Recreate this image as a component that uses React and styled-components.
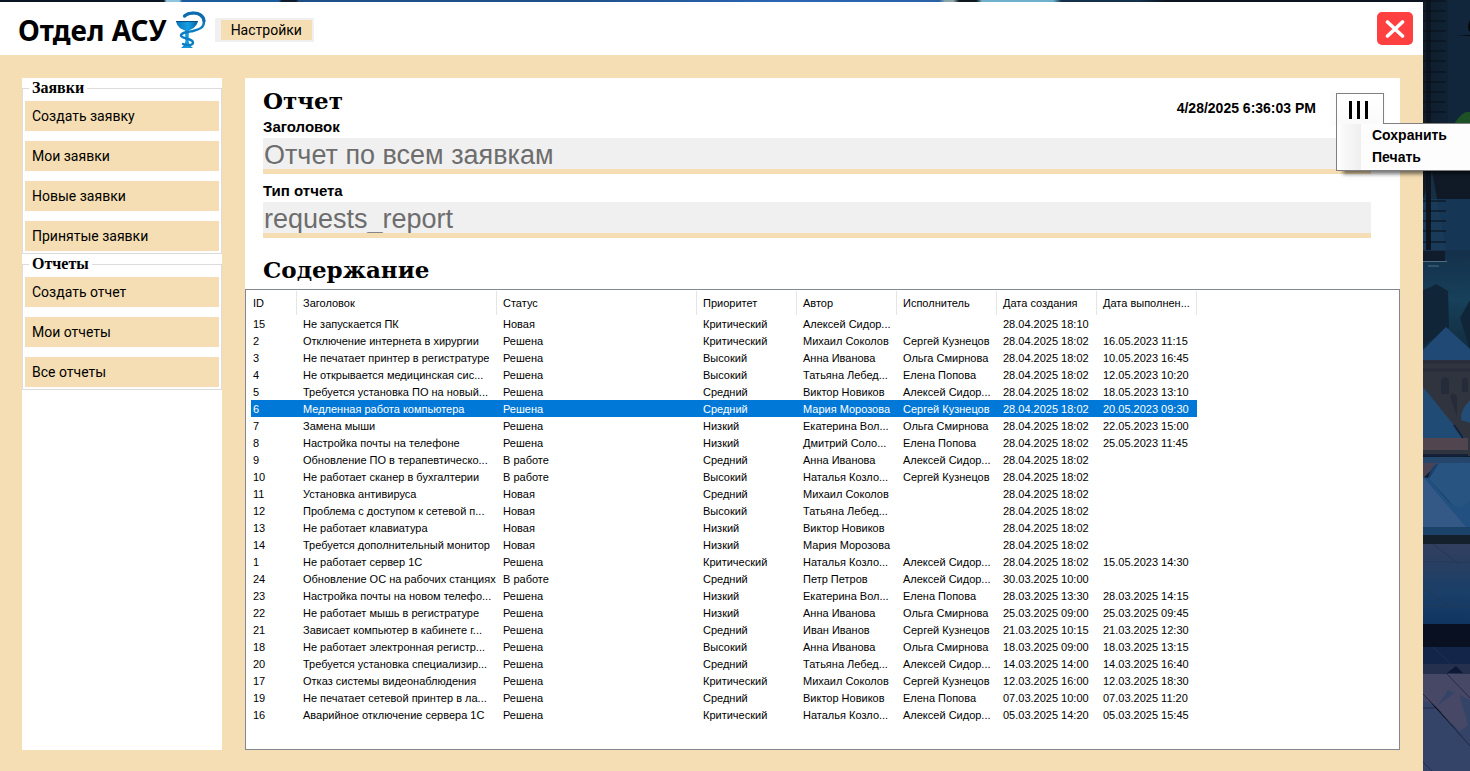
import React from "react";
import styled, { createGlobalStyle, css } from "styled-components";

const WHEAT = "#f5deb3";
const SANS = `"Liberation Sans", Arial, sans-serif`;
const SERIF = `"Liberation Serif", "Times New Roman", serif`;
const HEADING_SERIF = `"DejaVu Serif", serif`;
const UI = `Roboto, "Liberation Sans", sans-serif`;

const GlobalStyle = createGlobalStyle`
  * { box-sizing: border-box; }
  body { margin: 0; background: #0d1c2c; color: #000; font-family: ${SANS}; }
  button { font: inherit; color: inherit; border: 0; padding: 0; cursor: pointer; }
`;

const Desktop = styled.div`
  min-height: 100vh;
  display: grid;
  grid-template-columns: minmax(0, 1fr) 47px;
  grid-template-rows: 2px 1fr;
  overflow: hidden;
`;

const TopEdge = styled.div`
  background: linear-gradient(
    to right,
    #0a1624 0 11.5%, #8fc4dc 11.7% 12.6%, #1d5c9c 12.8% 19.6%,
    #101c2c 19.8% 20.8%, #1f4f88 21% 40%, #2a66b4 55%, #2a62a8 66%,
    #8aa4a8 66.4% 67%, #101820 67.4% 68.6%, #6fb0cc 69% 74%,
    #14304c 74.6% 80%, #0b1420 82% 100%
  );
`;

const Wallpaper = styled.div`
  grid-column: 2;
  grid-row: 1 / 3;
  overflow: hidden;
  svg { display: block; width: 100%; height: 100%; min-height: 771px; }
`;

const Window = styled.div`
  display: flex;
  flex-direction: column;
  background: ${WHEAT};
`;

const Header = styled.header`
  height: 53px;
  padding: 3px 10px 0 18px;
  display: flex;
  align-items: center;
  background: #fff;
`;

const Brand = styled.h1`
  margin: 0 8px 0 0;
  font: bold 28px/40px "Comic Sans MS", "Noto Sans", sans-serif;
  white-space: nowrap;
`;

const SettingsBar = styled.nav`
  margin-left: 8px;
  padding: 2px 2px 2px 6px;
  background: #f0f0f0;
`;

const SettingsButton = styled.button`
  display: block;
  height: 20px;
  padding: 0 10px;
  background: ${WHEAT};
  font: 14px/20px ${UI};
`;

const CloseButton = styled.button`
  align-self: flex-start;
  width: 36px;
  height: 33px;
  margin: 7px 0 0 auto;
  border-radius: 5px;
  background: #ff4040;
  display: grid;
  place-items: center;
`;

const Body = styled.div`
  flex: 1;
  display: flex;
  gap: 23px;
  padding: 23px 23px 21px 22px;
`;

const Sidebar = styled.nav`
  flex: 0 0 200px;
  background: #fff;
`;

const Group = styled.fieldset`
  margin: 0;
  border: 1px solid #dcdcdc;
  padding: 3px 2px 2px;
  display: flex;
  flex-direction: column;
  gap: 10px;
  min-width: 0;
`;

const Legend = styled.legend`
  margin-left: 4px;
  padding: 0 3px;
  font: bold 16px/20px ${SERIF};
`;

const SideButton = styled.button`
  display: block;
  width: 100%;
  height: 30px;
  padding: 0 7px;
  background: ${WHEAT};
  font: 14px/30px ${UI};
  text-align: left;
`;

const Panel = styled.main`
  flex: 1;
  min-width: 0;
  display: flex;
  flex-direction: column;
  background: #fff;
`;

const ReportHead = styled.div`
  display: flex;
  justify-content: space-between;
  height: 60px;
  padding: 7px 14px 0 18px;
`;

const Heading = styled.h2`
  margin: 0;
  font: bold 23px/32px ${HEADING_SERIF};
`;

const ContentHeading = styled(Heading)`
  margin: 16px 0 3px 18px;
`;

const FieldLabel = styled.label`
  display: block;
  font: bold 15px/20px ${SANS};
`;

const HeadTools = styled.div`
  display: flex;
  align-items: flex-start;
`;

const Timestamp = styled.time`
  padding-top: 13px;
  font: bold 14px/20px ${SANS};
`;

const MenuBar = styled.div`
  position: relative;
  margin: 6px 0 0 14px;
  padding: 2px 2px 2px 6px;
  background: #fcfcfc;
`;

const MenuToggle = styled.button`
  position: relative;
  z-index: 3;
  width: 48px;
  height: 31px;
  padding: 2px 3px 0 0;
  border: 1px solid #808080;
  border-bottom: 0;
  background: linear-gradient(#fff, #fafafa);
  display: grid;
  place-items: center;
`;

const Menu = styled.ul`
  position: absolute;
  z-index: 2;
  top: 32px;
  left: 6px;
  width: 160px;
  height: 48px;
  margin: 0;
  padding: 0 1px;
  list-style: none;
  border: 1px solid #808080;
  background: linear-gradient(to right, #fdfdfd 4px, #fafafa 4px, #efefef 24px, #fdfdfd 24px);
  box-shadow: 5px 5px 4px -2px rgba(0, 0, 0, 0.55);
`;

const MenuItem = styled.button`
  display: block;
  width: 100%;
  height: 22px;
  padding-left: 34px;
  background: transparent;
  font: bold 14px/22px ${SANS};
  text-align: left;
`;

const ReportFields = styled.div`
  display: flex;
  flex-direction: column;
  padding: 0 29px 0 18px;
`;

const FieldInput = styled.input`
  display: block;
  width: 100%;
  height: 36px;
  padding: 3px 0 0 1px;
  border: 0;
  border-bottom: 5px solid ${WHEAT};
  border-radius: 0;
  background: #f0f0f0;
  color: #6d6d6d;
  font: 27px/28px ${SANS};
  outline: 0;
`;

const TypeLabel = styled(FieldLabel)`
  margin: 7px 0 1px;
`;

const ListBox = styled.div`
  flex: 1;
  padding: 1px;
  border: 1px solid #828790;
  overflow: hidden;
`;

const Table = styled.table`
  border-collapse: collapse;
  table-layout: fixed;
  width: 950px;
  font: 11px/15px ${SANS};
`;

const Col = styled.col`
  width: ${({ $w }) => $w}px;
`;

const cell = css`
  text-align: left;
  white-space: nowrap;
  overflow: hidden;
`;

const HeadCell = styled.th`
  ${cell}
  height: 24px;
  padding: 0 2px 0 6px;
  font-weight: normal;
  background: linear-gradient(#e5e5e5, #e5e5e5) right / 1px 100% no-repeat;
`;

const Cell = styled.td`
  ${cell}
  height: 17px;
  padding: 2px 2px 0 6px;
`;

const Row = styled.tr`
  ${({ $selected }) =>
    $selected &&
    css`
      color: #fff;
      td { background: #0078d7; }
      td:first-child { background: linear-gradient(to right, #fff 4px, #0078d7 4px); }
    `}
`;

const COLUMNS = [
  ["ID", 50],
  ["Заголовок", 200],
  ["Статус", 200],
  ["Приоритет", 100],
  ["Автор", 100],
  ["Исполнитель", 100],
  ["Дата создания", 100],
  ["Дата выполнен...", 100],
];

const ROWS = [
  ["15", "Не запускается ПК", "Новая", "Критический", "Алексей Сидор...", "", "28.04.2025 18:10", ""],
  ["2", "Отключение интернета в хирургии", "Решена", "Критический", "Михаил Соколов", "Сергей Кузнецов", "28.04.2025 18:02", "16.05.2023 11:15"],
  ["3", "Не печатает принтер в регистратуре", "Решена", "Высокий", "Анна Иванова", "Ольга Смирнова", "28.04.2025 18:02", "10.05.2023 16:45"],
  ["4", "Не открывается медицинская сис...", "Решена", "Высокий", "Татьяна Лебед...", "Елена Попова", "28.04.2025 18:02", "12.05.2023 10:20"],
  ["5", "Требуется установка ПО на новый...", "Решена", "Средний", "Виктор Новиков", "Алексей Сидор...", "28.04.2025 18:02", "18.05.2023 13:10"],
  ["6", "Медленная работа компьютера", "Решена", "Средний", "Мария Морозова", "Сергей Кузнецов", "28.04.2025 18:02", "20.05.2023 09:30"],
  ["7", "Замена мыши", "Решена", "Низкий", "Екатерина Вол...", "Ольга Смирнова", "28.04.2025 18:02", "22.05.2023 15:00"],
  ["8", "Настройка почты на телефоне", "Решена", "Низкий", "Дмитрий Соло...", "Елена Попова", "28.04.2025 18:02", "25.05.2023 11:45"],
  ["9", "Обновление ПО в терапевтическо...", "В работе", "Средний", "Анна Иванова", "Алексей Сидор...", "28.04.2025 18:02", ""],
  ["10", "Не работает сканер в бухгалтерии", "В работе", "Высокий", "Наталья Козло...", "Сергей Кузнецов", "28.04.2025 18:02", ""],
  ["11", "Установка антивируса", "Новая", "Средний", "Михаил Соколов", "", "28.04.2025 18:02", ""],
  ["12", "Проблема с доступом к сетевой п...", "Новая", "Высокий", "Татьяна Лебед...", "", "28.04.2025 18:02", ""],
  ["13", "Не работает клавиатура", "Новая", "Низкий", "Виктор Новиков", "", "28.04.2025 18:02", ""],
  ["14", "Требуется дополнительный монитор", "Новая", "Низкий", "Мария Морозова", "", "28.04.2025 18:02", ""],
  ["1", "Не работает сервер 1С", "Решена", "Критический", "Наталья Козло...", "Алексей Сидор...", "28.04.2025 18:02", "15.05.2023 14:30"],
  ["24", "Обновление ОС на рабочих станциях", "В работе", "Средний", "Петр Петров", "Алексей Сидор...", "30.03.2025 10:00", ""],
  ["23", "Настройка почты на новом телефо...", "Решена", "Низкий", "Екатерина Вол...", "Елена Попова", "28.03.2025 13:30", "28.03.2025 14:15"],
  ["22", "Не работает мышь в регистратуре", "Решена", "Низкий", "Анна Иванова", "Ольга Смирнова", "25.03.2025 09:00", "25.03.2025 09:45"],
  ["21", "Зависает компьютер в кабинете г...", "Решена", "Средний", "Иван Иванов", "Сергей Кузнецов", "21.03.2025 10:15", "21.03.2025 12:30"],
  ["18", "Не работает электронная регистр...", "Решена", "Высокий", "Анна Иванова", "Ольга Смирнова", "18.03.2025 09:00", "18.03.2025 13:15"],
  ["20", "Требуется установка специализир...", "Решена", "Средний", "Татьяна Лебед...", "Алексей Сидор...", "14.03.2025 14:00", "14.03.2025 16:40"],
  ["17", "Отказ системы видеонаблюдения", "Решена", "Критический", "Михаил Соколов", "Сергей Кузнецов", "12.03.2025 16:00", "12.03.2025 18:30"],
  ["19", "Не печатает сетевой принтер в ла...", "Решена", "Средний", "Виктор Новиков", "Елена Попова", "07.03.2025 10:00", "07.03.2025 11:20"],
  ["16", "Аварийное отключение сервера 1С", "Решена", "Критический", "Наталья Козло...", "Алексей Сидор...", "05.03.2025 14:20", "05.03.2025 15:45"],
];

const GROUPS = [
  ["Заявки", ["Создать заявку", "Мои заявки", "Новые заявки", "Принятые заявки"]],
  ["Отчеты", ["Создать отчет", "Мои отчеты", "Все отчеты"]],
];

const BowlOfHygieia = () => (
  <svg width="32" height="38" viewBox="0 0 32 38" fill="none" aria-hidden="true">
    <defs>
      <linearGradient id="bowl" x1="0" x2="1">
        <stop offset="0" stopColor="#0b74b8" />
        <stop offset="0.55" stopColor="#15a0e2" />
        <stop offset="1" stopColor="#0a5d9c" />
      </linearGradient>
    </defs>
    <path d="M1 10 H23 C22 15 18 18 14 19.500 L13.500 29 C14 33 15 35 18 37 H6 C9 35 10.500 32 10.500 29 L10 19.500 C5 18 2 15 1 10 Z" fill="url(#bowl)" />
    <path d="M1 10.500 H23" stroke="#0a4f88" />
    <path d="M10 5 C12 3 14 2 18 2 C25 2 29 5.500 29 10.500 C29 17 24 18.500 18 20 C12 21 6.500 21.500 6 24.500 C6 28 18 27 18 31.500 C18 34.500 12 35 8 33" stroke="#0d7cc2" strokeWidth="2.400" strokeLinecap="round" />
    <path d="M9.500 5 C12 2.500 15 2 19 2 C24 2 28.500 5 29 10" stroke="#0d6cae" strokeWidth="3.200" strokeLinecap="round" />
  </svg>
);

const NightScene = () => (
  <svg viewBox="0 0 47 771" preserveAspectRatio="none" aria-hidden="true">
    <defs>
      <linearGradient id="sky" x1="0" x2="1" y1="0" y2="0">
        <stop offset="0" stopColor="#101d2c" />
        <stop offset="0.6" stopColor="#0f2336" />
        <stop offset="1" stopColor="#0c1a28" />
      </linearGradient>
      <linearGradient id="mist" x1="0" x2="0" y1="0" y2="1">
        <stop offset="0" stopColor="#14304a" />
        <stop offset="0.5" stopColor="#17405a" />
        <stop offset="1" stopColor="#122c3e" />
      </linearGradient>
      <linearGradient id="ground" x1="0" x2="0" y1="0" y2="1">
        <stop offset="0" stopColor="#333f5e" />
        <stop offset="0.6" stopColor="#1a3f68" />
        <stop offset="1" stopColor="#113561" />
      </linearGradient>
    </defs>
    <rect width="47" height="771" fill="url(#sky)" />
    <path d="M25 0 H47 V123 H25 Z" fill="#11263a" />
    <path d="M47 20 Q43 28 47 32 Z M33 36 H47 V35 Z" fill="#05080d" />
    <path d="M31 124 Q40 110 47 112 V124 Z" fill="#1c5226" />
    <rect y="170" width="47" height="30" fill="#101a26" />
    <rect y="199" width="47" height="56" fill="#163655" />
    <path d="M9 171 L24 255 H0 V199 Z" fill="#1c3d5a" opacity="0.6" />
    <rect x="3" width="5" height="255" fill="#0b141f" />
    <path d="M0 1H23M0 11H23M0 21H23M0 31H23M0 41H23M0 51H23M0 61H23M0 72H23M0 82H23M0 92H23M0 102H23M0 112H23M0 201H23M0 211H23M0 221H23M0 231H23M0 242H23" stroke="#080e17" strokeWidth="1.200" />
    <rect y="250" width="47" height="100" fill="url(#mist)" />
    <path d="M0 251 H22 V261 H0 Z" fill="#101c2b" />
    <path d="M0 261.500 H24 M5 266 H16" stroke="#4c7187" />
    <path d="M0 290 L8 287 L13 284 L20 288 L25 291 L26 328 L0 346 Z M37 318 L47 300 V350 Z" fill="#102638" />
    <path d="M0 350 L23 327 L47 349 V361 H0 Z" fill="#204a75" />
    <rect y="360" width="47" height="96" fill="#30343f" />
    <path d="M0 362 H47 M0 370 H47" stroke="#272d3b" strokeWidth="3" />
    <path d="M18 380 q4 -6 8 0 v14 h-8 Z M27 396 q4 -5 7 1 v20 Z M39 380 q4 -5 6 0 v12 h-6 Z" fill="#252b39" />
    <path d="M0 387 L30 424 L42 438 H0 Z" fill="#204b75" />
    <path d="M47 400 Q37 410 38 420 L47 423 Z" fill="#234d76" />
    <path d="M0 438 H45 V450 H0 Z" fill="#51454f" />
    <path d="M0 455 H45 M31 425 L40 438" stroke="#142139" strokeWidth="2" />
    <rect y="457" width="47" height="7" fill="#26456a" />
    <path d="M0 463 H16 L0 478 Z" fill="#4a4355" />
    <path d="M16 463 H47 V528 H0 V477 L5 478 Z" fill="#225080" />
    <path d="M5 478 Q8 465 16 463 L11 480 L30 507 Z" fill="#1a4069" />
    <path d="M16 463 H47 V500 Q39 512 29 504 L6 479 Z" fill="#275481" />
    <path d="M0 477 L43 527 H0 Z" fill="#345987" />
    <rect y="527" width="47" height="8" fill="#1b436a" />
    <rect y="535" width="47" height="9" fill="#14202c" />
    <rect y="544" width="47" height="80" fill="url(#ground)" />
    <path d="M0 562 H47 M10 544 L36 564 M0 588 L24 604 M0 606 H47" stroke="#223958" />
    <rect y="624" width="47" height="23" fill="#091022" />
    <rect y="647" width="47" height="27" fill="#13264a" />
    <path d="M0 664 H47 V674 H0 Z" fill="#25304f" />
    <path d="M10 647 L36 672" stroke="#1d3154" />
    <path d="M24 673 L33 666 L40 673 Z" fill="#0d1933" />
    <path d="M0 674 H47 V771 H0 Z" fill="#344468" />
    <path d="M0 674 H47 V700 L25 690 L14 707 L0 700 Z M12 708 L35 690 L45 725 L37 731 Z" fill="#514966" opacity="0.65" />
    <path d="M24 674 L47 698 M0 694 L14 708 L47 746 M0 708 H12 M0 762 L9 771" stroke="#222d4a" />
  </svg>
);

export default function App() {
  return (
    <Desktop>
      <GlobalStyle />
      <TopEdge />
      <Wallpaper>
        <NightScene />
      </Wallpaper>
      <Window>
        <Header>
          <Brand>Отдел АСУ</Brand>
          <BowlOfHygieia />
          <SettingsBar>
            <SettingsButton type="button">Настройки</SettingsButton>
          </SettingsBar>
          <CloseButton type="button" aria-label="Закрыть">
            <svg width="20" height="18" viewBox="0 0 20 18" aria-hidden="true">
              <path d="M2.500 2 L17.500 16 M17.500 2 L2.500 16" stroke="#fff" strokeWidth="3.600" strokeLinecap="round" />
            </svg>
          </CloseButton>
        </Header>
        <Body>
          <Sidebar>
            {GROUPS.map(([name, items]) => (
              <Group key={name}>
                <Legend>{name}</Legend>
                {items.map((item) => (
                  <SideButton type="button" key={item}>{item}</SideButton>
                ))}
              </Group>
            ))}
          </Sidebar>
          <Panel>
            <ReportHead>
              <div>
                <Heading>Отчет</Heading>
                <FieldLabel htmlFor="report-title">Заголовок</FieldLabel>
              </div>
              <HeadTools>
                <Timestamp>4/28/2025 6:36:03 PM</Timestamp>
                <MenuBar>
                  <MenuToggle type="button" aria-label="Меню" aria-expanded="true">
                    <svg width="19" height="18" viewBox="0 0 19 18" aria-hidden="true">
                      <path d="M0 0h3v18H0zM8 0h3v18H8zM16 0h3v18h-3z" />
                    </svg>
                  </MenuToggle>
                  <Menu>
                    <li><MenuItem type="button">Сохранить</MenuItem></li>
                    <li><MenuItem type="button">Печать</MenuItem></li>
                  </Menu>
                </MenuBar>
              </HeadTools>
            </ReportHead>
            <ReportFields>
              <FieldInput id="report-title" readOnly value="Отчет по всем заявкам" />
              <TypeLabel htmlFor="report-type">Тип отчета</TypeLabel>
              <FieldInput id="report-type" readOnly value="requests_report" />
            </ReportFields>
            <ContentHeading>Содержание</ContentHeading>
            <ListBox>
              <Table>
                <colgroup>
                  {COLUMNS.map(([name, w]) => <Col key={name} $w={w} />)}
                </colgroup>
                <thead>
                  <tr>{COLUMNS.map(([name]) => <HeadCell key={name} scope="col">{name}</HeadCell>)}</tr>
                </thead>
                <tbody>
                  {ROWS.map((row) => (
                    <Row key={row[0]} $selected={row[0] === "6"}>
                      {row.map((value, i) => <Cell key={COLUMNS[i][0]}>{value}</Cell>)}
                    </Row>
                  ))}
                </tbody>
              </Table>
            </ListBox>
          </Panel>
        </Body>
      </Window>
    </Desktop>
  );
}
